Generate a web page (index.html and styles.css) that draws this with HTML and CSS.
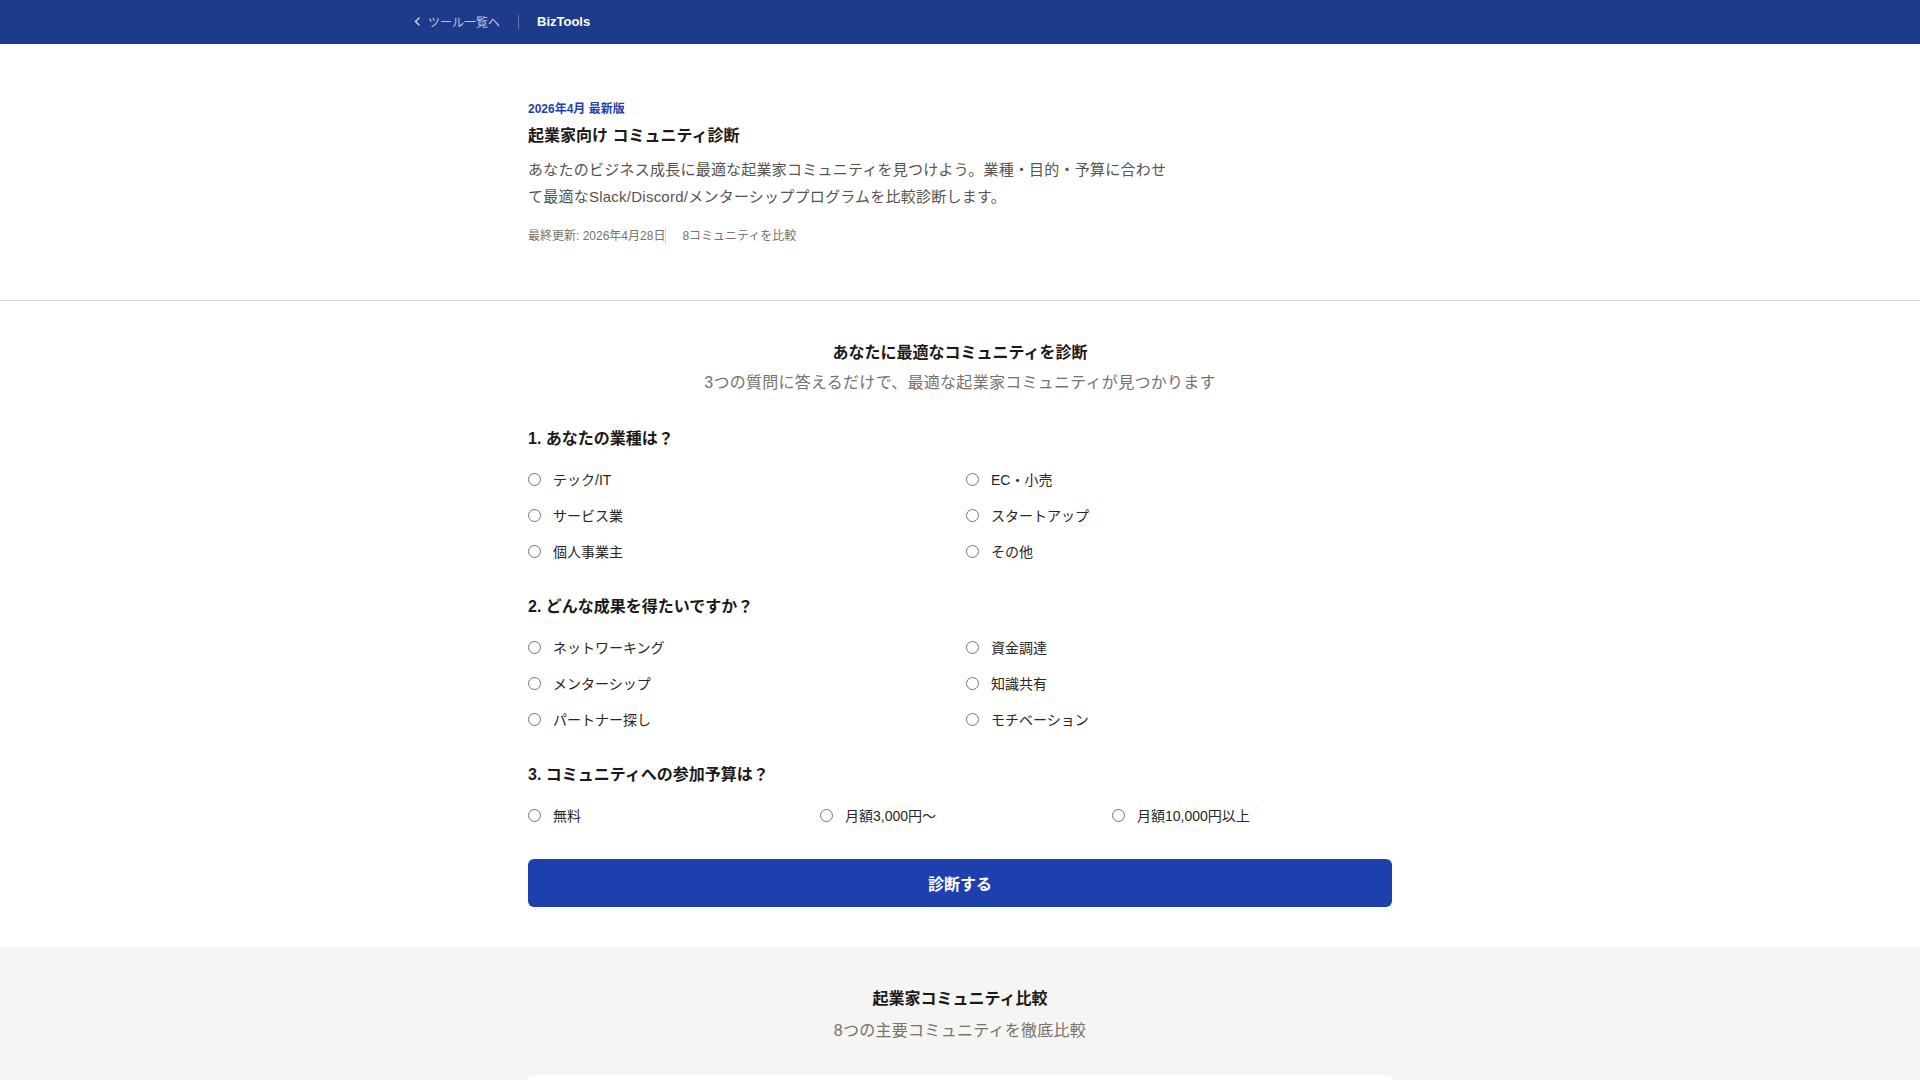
FILE: index.html
```html
<!DOCTYPE html>
<html lang="ja">
<head>
<meta charset="utf-8">
<title>起業家向け コミュニティ診断 | BizTools</title>
<link rel="stylesheet" href="styles.css">
</head>
<body>
<header class="topbar">
  <div class="topbar-inner">
    <a class="back-link" href="#">
      <svg class="chev" width="6" height="9" viewBox="0 0 6 9" aria-hidden="true"><path d="M5 1 L1.5 4.5 L5 8" fill="none" stroke="currentColor" stroke-width="1.6" stroke-linecap="round" stroke-linejoin="round"/></svg>
      <span>ツール一覧へ</span>
    </a>
    <span class="topbar-sep"></span>
    <span class="brand">BizTools</span>
  </div>
</header>

<section class="hero">
  <div class="container">
    <p class="eyebrow">2026年4月 最新版</p>
    <h1 class="hero-title">起業家向け コミュニティ診断</h1>
    <p class="hero-desc">あなたのビジネス成長に最適な起業家コミュニティを見つけよう。業種・目的・予算に合わせて最適なSlack/Discord/メンターシッププログラムを比較診断します。</p>
    <div class="meta">
      <span class="meta-item">最終更新: 2026年4月28日</span>
      <span class="meta-item">8コミュニティを比較</span>
    </div>
  </div>
</section>

<section class="diagnose">
  <div class="container">
    <h2 class="section-title">あなたに最適なコミュニティを診断</h2>
    <p class="section-sub">3つの質問に答えるだけで、最適な起業家コミュニティが見つかります</p>

    <div class="question">
      <h3 class="q-title">1. あなたの業種は？</h3>
      <div class="options cols-2">
        <label class="option"><input type="radio" name="q1"><span>テック/IT</span></label>
        <label class="option"><input type="radio" name="q1"><span>EC・小売</span></label>
        <label class="option"><input type="radio" name="q1"><span>サービス業</span></label>
        <label class="option"><input type="radio" name="q1"><span>スタートアップ</span></label>
        <label class="option"><input type="radio" name="q1"><span>個人事業主</span></label>
        <label class="option"><input type="radio" name="q1"><span>その他</span></label>
      </div>
    </div>

    <div class="question">
      <h3 class="q-title">2. どんな成果を得たいですか？</h3>
      <div class="options cols-2">
        <label class="option"><input type="radio" name="q2"><span>ネットワーキング</span></label>
        <label class="option"><input type="radio" name="q2"><span>資金調達</span></label>
        <label class="option"><input type="radio" name="q2"><span>メンターシップ</span></label>
        <label class="option"><input type="radio" name="q2"><span>知識共有</span></label>
        <label class="option"><input type="radio" name="q2"><span>パートナー探し</span></label>
        <label class="option"><input type="radio" name="q2"><span>モチベーション</span></label>
      </div>
    </div>

    <div class="question">
      <h3 class="q-title">3. コミュニティへの参加予算は？</h3>
      <div class="options cols-3">
        <label class="option"><input type="radio" name="q3"><span>無料</span></label>
        <label class="option"><input type="radio" name="q3"><span>月額3,000円〜</span></label>
        <label class="option"><input type="radio" name="q3"><span>月額10,000円以上</span></label>
      </div>
    </div>

    <button class="submit" type="button">診断する</button>
  </div>
</section>

<section class="compare">
  <div class="container">
    <h2 class="section-title">起業家コミュニティ比較</h2>
    <p class="section-sub">8つの主要コミュニティを徹底比較</p>
    <div class="card"></div>
  </div>
</section>
</body>
</html>
```

FILE: styles.css
```css
* {
  box-sizing: border-box;
}

html, body {
  margin: 0;
  padding: 0;
}

body {
  font-family: "Liberation Sans", "Noto Sans CJK JP", sans-serif;
  color: #1c1917;
  background: #ffffff;
}

h1, h2, h3, p {
  margin: 0;
}

a {
  text-decoration: none;
  color: inherit;
}

/* Top bar */
.topbar {
  background: #1e3a8a;
  height: 44px;
}

.topbar-inner {
  max-width: 1140px;
  margin: 0 auto;
  padding: 0 24px 1px;
  height: 100%;
  display: flex;
  align-items: center;
  gap: 18px;
}

.back-link {
  display: flex;
  align-items: center;
  gap: 8px;
  font-size: 12px;
  color: rgba(255, 255, 255, 0.72);
}

.chev {
  display: block;
}

.topbar-sep {
  width: 1px;
  height: 14px;
  background: rgba(255, 255, 255, 0.3);
}

.brand {
  color: #ffffff;
  font-weight: 700;
  font-size: 13px;
}

/* Containers */
.container {
  max-width: 864px;
  margin: 0 auto;
}

/* Hero */
.hero {
  padding: 56px 0 55px;
  border-bottom: 1px solid #d6d3d1;
}

.eyebrow {
  font-size: 12px;
  line-height: 18px;
  font-weight: 700;
  color: #1e40af;
}

.hero-title {
  margin-top: 6px;
  font-size: 16px;
  line-height: 24px;
  font-weight: 700;
  color: #1c1917;
}

.hero-desc {
  margin-top: 8px;
  max-width: 650px;
  font-size: 15px;
  line-height: 27px;
  letter-spacing: 0.016em;
  color: #57534e;
}

.meta {
  margin-top: 17px;
  display: flex;
  font-size: 12px;
  line-height: 18px;
  color: #78716c;
}

.meta-item + .meta-item {
  border-left: 1px solid #d6d3d1;
  padding-left: 16px;
}

/* Section headings */
.section-title {
  text-align: center;
  font-size: 16px;
  line-height: 24px;
  font-weight: 700;
  color: #1c1917;
}

.section-sub {
  margin-top: 6px;
  text-align: center;
  font-size: 16px;
  line-height: 24px;
  letter-spacing: 0.017em;
  color: #78716c;
}

/* Diagnose */
.diagnose {
  padding: 40px 0 40px;
}

.question {
  margin-top: 32px;
}

.q-title {
  font-size: 16px;
  line-height: 24px;
  font-weight: 700;
  color: #1c1917;
  margin-bottom: 16px;
}

.options {
  display: grid;
  gap: 12px;
}

.cols-2 {
  grid-template-columns: repeat(2, 1fr);
}

.cols-3 {
  grid-template-columns: repeat(3, 1fr);
}

.option {
  display: flex;
  align-items: center;
  gap: 12px;
  height: 24px;
  font-size: 14px;
  color: #292524;
  cursor: pointer;
}

.option input {
  margin: 0;
  width: 13px;
  height: 13px;
}

.submit {
  display: block;
  width: 100%;
  height: 48px;
  margin-top: 32px;
  border: none;
  border-radius: 6px;
  background: #1e40af;
  color: #ffffff;
  font-family: inherit;
  font-size: 16px;
  font-weight: 700;
  cursor: pointer;
}

/* Compare */
.compare {
  background: #f5f5f4;
  padding: 40px 0 48px;
}

.compare .section-sub {
  margin-top: 8px;
}

.card {
  margin-top: 32px;
  height: 240px;
  background: #ffffff;
  border-radius: 4px;
}
```
